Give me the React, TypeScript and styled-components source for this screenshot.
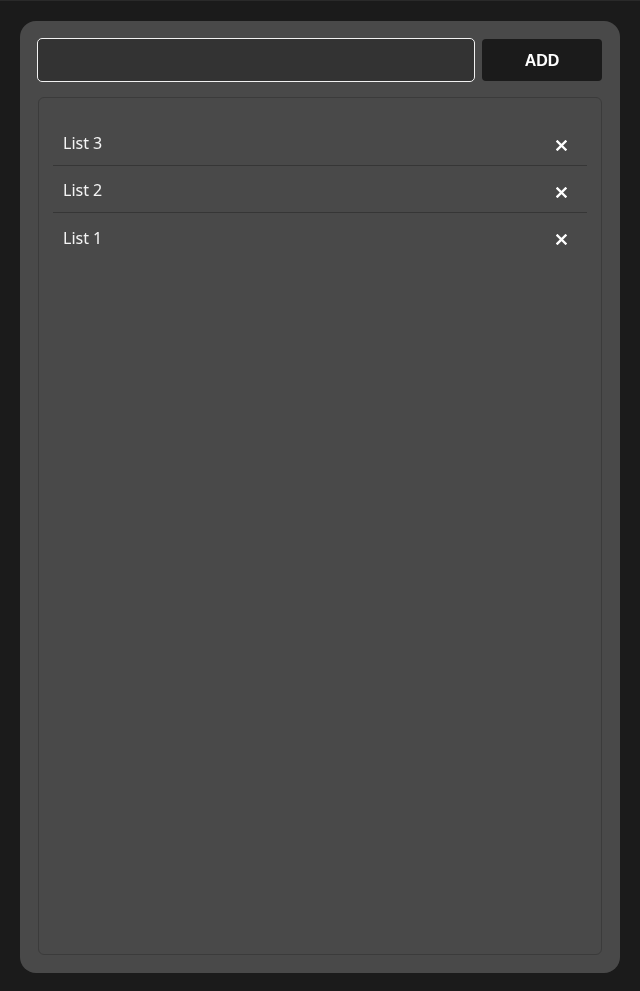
import React from "react";
import styled, { createGlobalStyle } from "styled-components";

const Global = createGlobalStyle`
  html, body { margin: 0; padding: 0; background: #1b1b1b; }
  body { font-family: "Noto Sans", "Open Sans", sans-serif; }
`;

const Page = styled.div`
  padding: 21px 20px 18px 20px;
  box-sizing: border-box;
  border-top: 1px solid #2a2a2a;
`;

const Card = styled.div`
  box-sizing: border-box;
  height: 952px;
  margin-top: -1px;
  background: #494949;
  border-radius: 16px;
  padding: 17px 18px 18px 17px;
  display: flex;
  flex-direction: column;
  gap: 15px;
`;

const Toolbar = styled.div`
  display: flex;
  gap: 7px;
  align-items: center;
`;

const Input = styled.input`
  flex: 1;
  height: 44px;
  box-sizing: border-box;
  background: #333333;
  border: 1px solid #f2f2f2;
  border-radius: 5px;
  color: #fff;
  font-size: 16px;
  font-family: "Noto Sans", sans-serif;
  padding: 0 9px;
  outline: none;
  caret-color: #fff;
`;

const AddButton = styled.button`
  width: 120px;
  height: 42px;
  box-sizing: border-box;
  padding: 2px 0 0 0;
  background: #1b1b1b;
  border: none;
  border-radius: 4px;
  color: #fff;
  font-family: "Liberation Sans", Arial, sans-serif;
  font-weight: bold;
  font-size: 16px;
  cursor: pointer;
`;

const ListBox = styled.div`
  flex: 1;
  margin-left: 1px;
  border: 1px solid #3b3b3b;
  border-radius: 6px;
  padding: 21px 14px 20px;
  display: flex;
  flex-direction: column;
`;

const Row = styled.div<{ $last?: boolean }>`
  box-sizing: border-box;
  height: 47px;
  display: flex;
  align-items: center;
  justify-content: space-between;
  padding: 2px 20px 0 10px;
  border-bottom: ${(p) => (p.$last ? "none" : "1px solid #363636")};
  color: #f4f4f4;
  font-size: 16px;
  line-height: 1;
`;

const DeleteIcon = styled.svg`
  width: 11px;
  height: 11px;
  margin-top: 4px;
`;

function XIcon() {
  return (
    <DeleteIcon viewBox="0 0 11 11">
      <path d="M1.5 1.5 L9.5 9.5 M9.5 1.5 L1.5 9.5" stroke="#fff" strokeWidth="2.4" strokeLinecap="square" />
    </DeleteIcon>
  );
}

const items = ["List 3", "List 2", "List 1"];

export default function App() {
  return (
    <>
      <Global />
      <Page>
        <Card>
          <Toolbar>
            <Input autoFocus />
            <AddButton>ADD</AddButton>
          </Toolbar>
          <ListBox>
            {items.map((t, i) => (
              <Row key={t} $last={i === items.length - 1}>
                <span>{t}</span>
                <XIcon />
              </Row>
            ))}
          </ListBox>
        </Card>
      </Page>
    </>
  );
}
